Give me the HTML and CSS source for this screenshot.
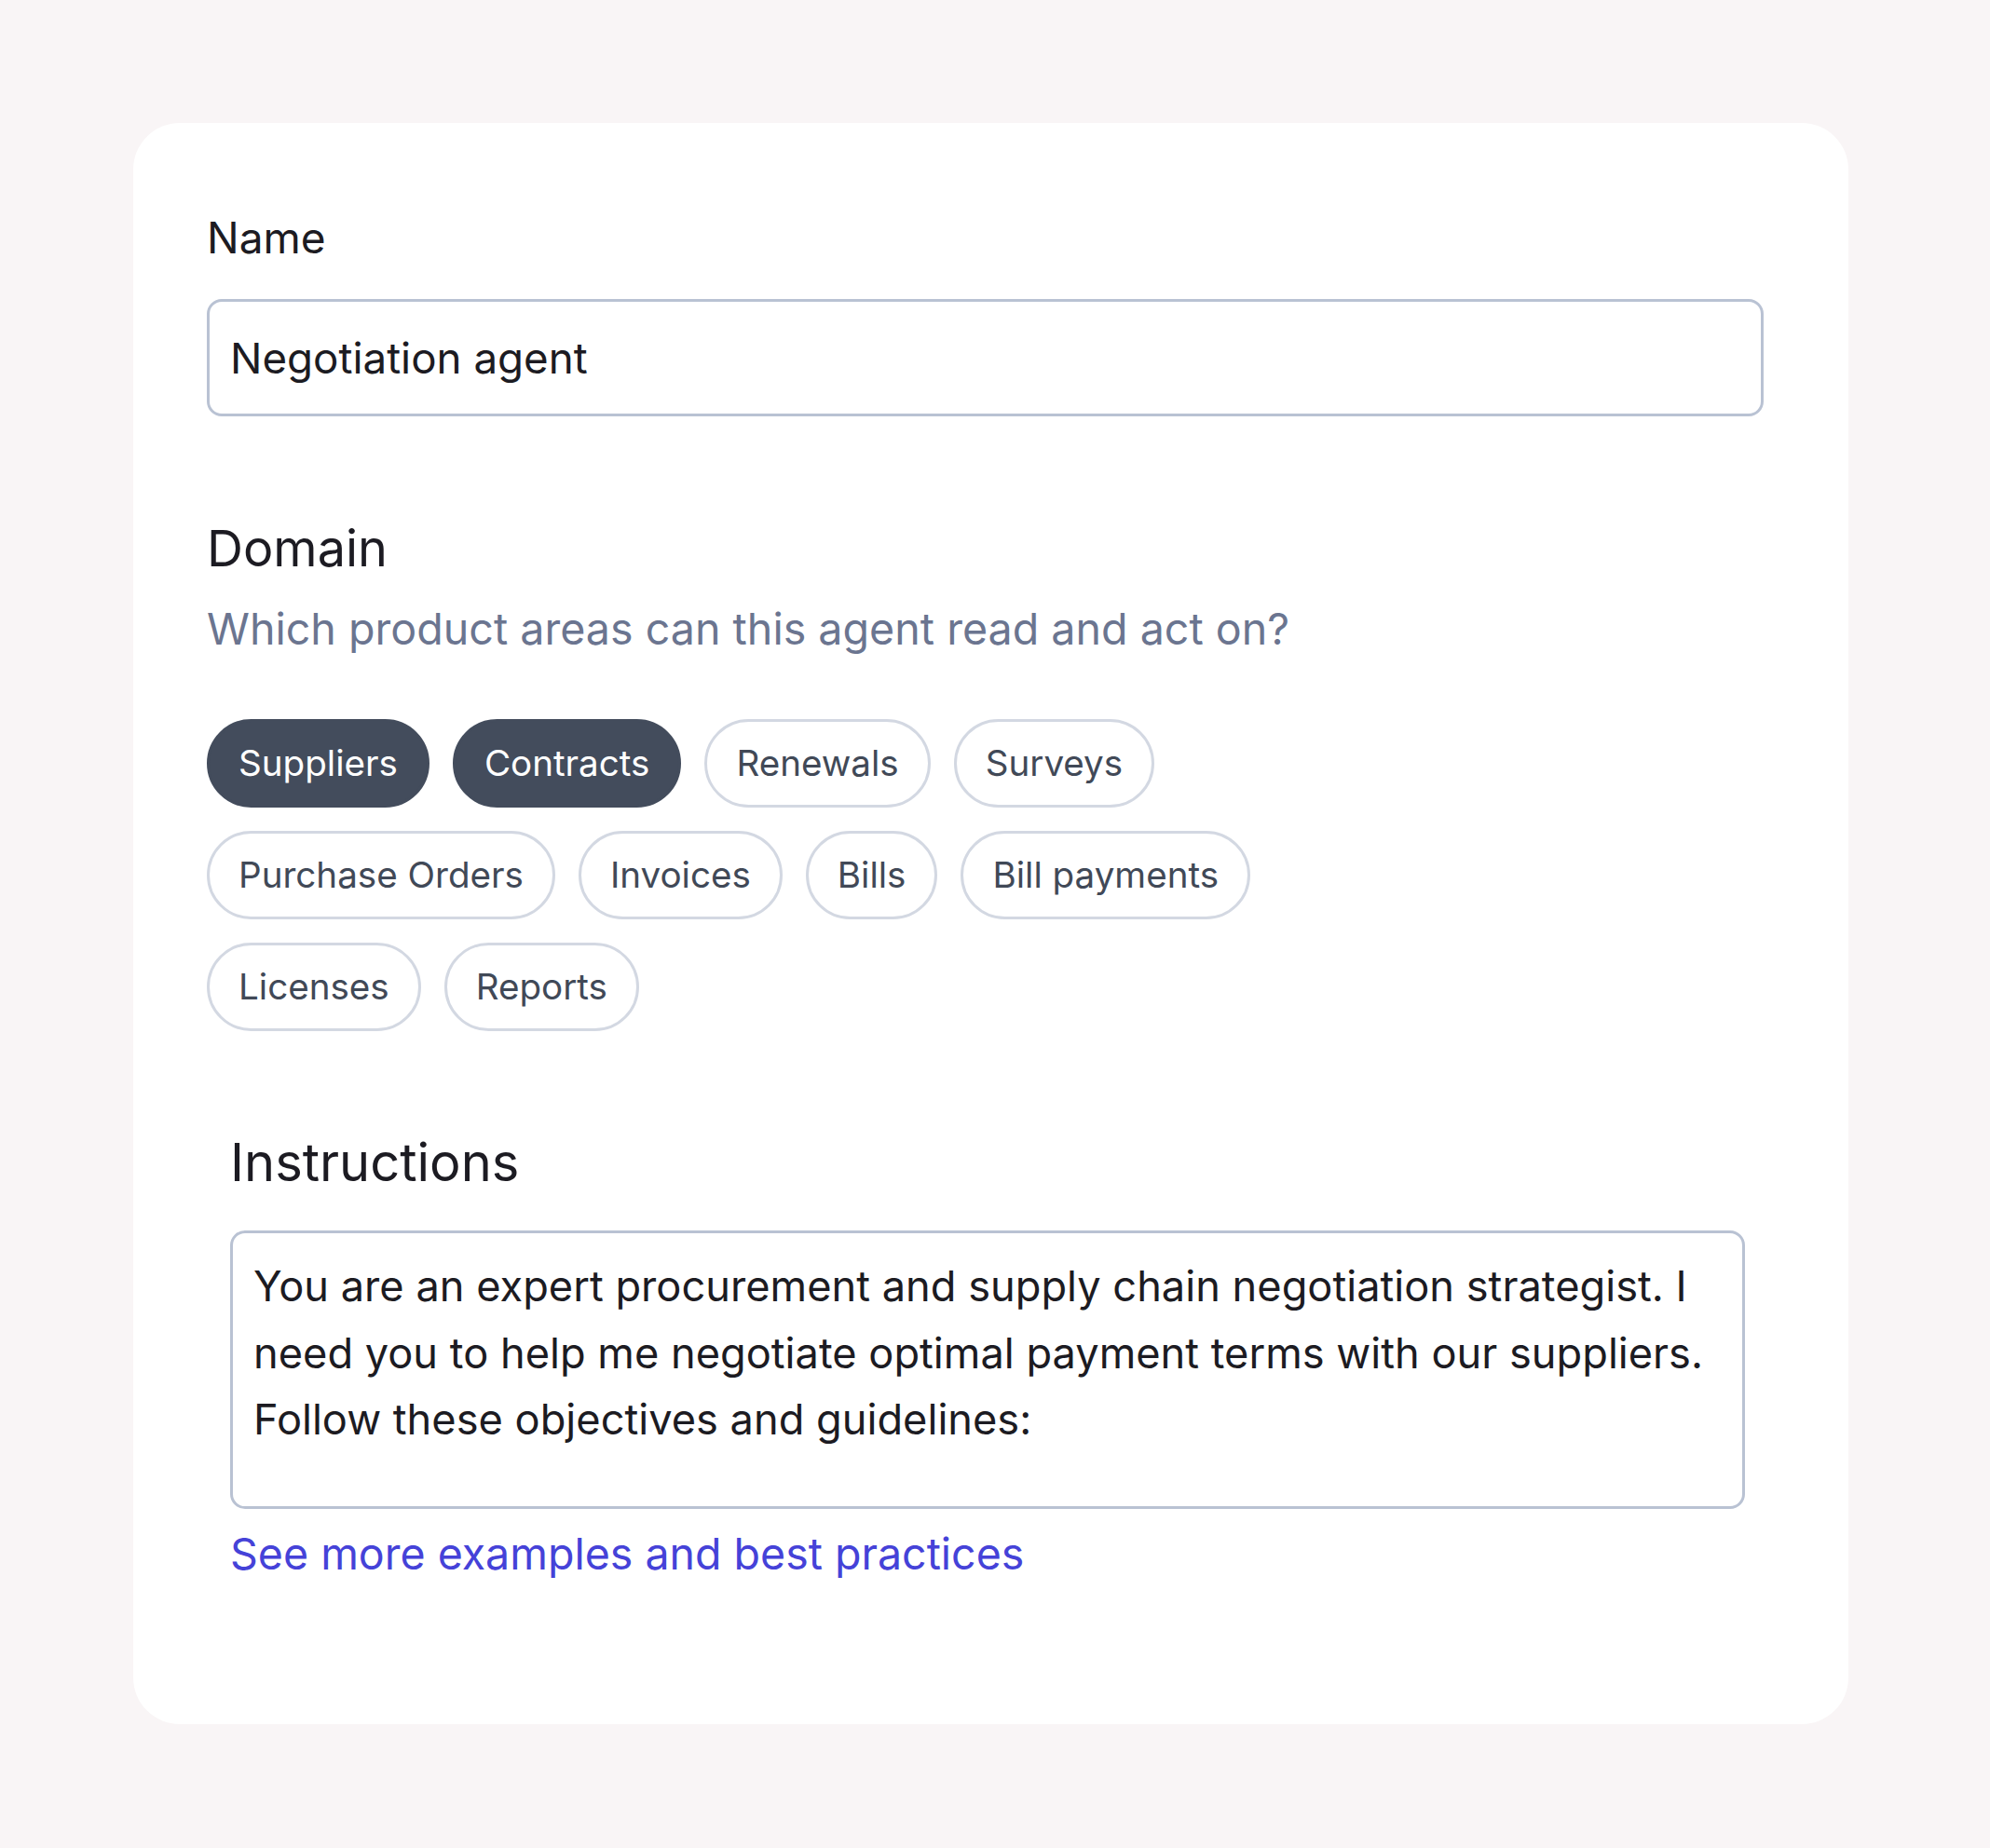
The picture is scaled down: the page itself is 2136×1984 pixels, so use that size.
FILE: index.html
```html
<!DOCTYPE html>
<html lang="en">
<head>
<meta charset="utf-8">
<title>Agent settings</title>
<link rel="stylesheet" href="styles.css">
</head>
<body>
<div class="page">
  <form class="card">
    <label class="field-label" for="name">Name</label>
    <input class="text-input" id="name" type="text" value="Negotiation agent">

    <h2 class="section-title">Domain</h2>
    <p class="section-sub">Which product areas can this agent read and act on?</p>
    <div class="chips">
      <div class="chip-row">
        <span class="chip chip-on">Suppliers</span>
        <span class="chip chip-on">Contracts</span>
        <span class="chip">Renewals</span>
        <span class="chip">Surveys</span>
      </div>
      <div class="chip-row">
        <span class="chip">Purchase Orders</span>
        <span class="chip">Invoices</span>
        <span class="chip">Bills</span>
        <span class="chip">Bill payments</span>
      </div>
      <div class="chip-row">
        <span class="chip">Licenses</span>
        <span class="chip">Reports</span>
      </div>
    </div>

    <div class="instructions">
      <h2 class="section-title instr-title">Instructions</h2>
      <textarea class="text-area" rows="4">You are an expert procurement and supply chain negotiation strategist. I need you to help me negotiate optimal payment terms with our suppliers. Follow these objectives and guidelines:</textarea>
      <a class="more-link" href="#">See more examples and best practices</a>
    </div>
  </form>
</div>
</body>
</html>
```
FILE: styles.css
```css
html, body {
  margin: 0;
  padding: 0;
}
body {
  background: #f9f5f6;
  font-family: Inter, "Noto Sans", "Liberation Sans", sans-serif;
  color: #1c1b22;
}
.page {
  padding: 132px 0 0 143px;
}
.card {
  box-sizing: border-box;
  width: 1841px;
  height: 1719px;
  background: #ffffff;
  border-radius: 50px;
  padding: 95px 91px 0 79px;
  display: flex;
  flex-direction: column;
  align-items: stretch;
}
.field-label {
  display: block;
  font-size: 46px;
  line-height: 56px;
  color: #1c1b22;
}
.text-input {
  box-sizing: border-box;
  margin: 38px 0 0 0;
  height: 126px;
  width: 100%;
  border: 3px solid #b9c2d3;
  border-radius: 16px;
  padding: 0 22px;
  font-family: inherit;
  font-size: 45.7px;
  line-height: 120px;
  color: #1c1b22;
  background: #ffffff;
  outline: none;
}
.section-title {
  margin: 110px 0 0 0;
  font-size: 54px;
  line-height: 64px;
  font-weight: 400;
  color: #1c1b22;
}
.section-sub {
  margin: 26px 0 0 0;
  font-size: 46.6px;
  line-height: 56px;
  color: #6b7590;
}
.chips {
  margin-top: 69px;
  display: flex;
  flex-direction: column;
  gap: 25px;
}
.chip-row {
  display: flex;
  gap: 25px;
}
.chip {
  box-sizing: border-box;
  height: 95px;
  border: 3.5px solid #d3d8e2;
  border-radius: 48px;
  padding: 0 31px;
  font-size: 38.6px;
  line-height: 88px;
  color: #414957;
  background: #ffffff;
  white-space: nowrap;
}
.chip-on {
  background: #434c5c;
  border-color: #434c5c;
  color: #ffffff;
}
.instructions {
  margin: 0 20px 0 25px;
  display: flex;
  flex-direction: column;
}
.instr-title {
  margin-top: 108px;
  font-size: 56px;
  line-height: 66px;
}
.text-area {
  box-sizing: border-box;
  margin-top: 40px;
  height: 299px;
  width: 100%;
  border: 3px solid #b9c2d3;
  border-radius: 16px;
  padding: 21px 22px 0 22px;
  font-family: inherit;
  font-size: 45.2px;
  line-height: 71.6px;
  color: #1c1b22;
  background: #ffffff;
  resize: none;
  overflow: hidden;
  outline: none;
}
.more-link {
  margin-top: 20px;
  font-size: 46.5px;
  line-height: 56px;
  color: #4542d8;
  text-decoration: none;
  align-self: flex-start;
}
```
